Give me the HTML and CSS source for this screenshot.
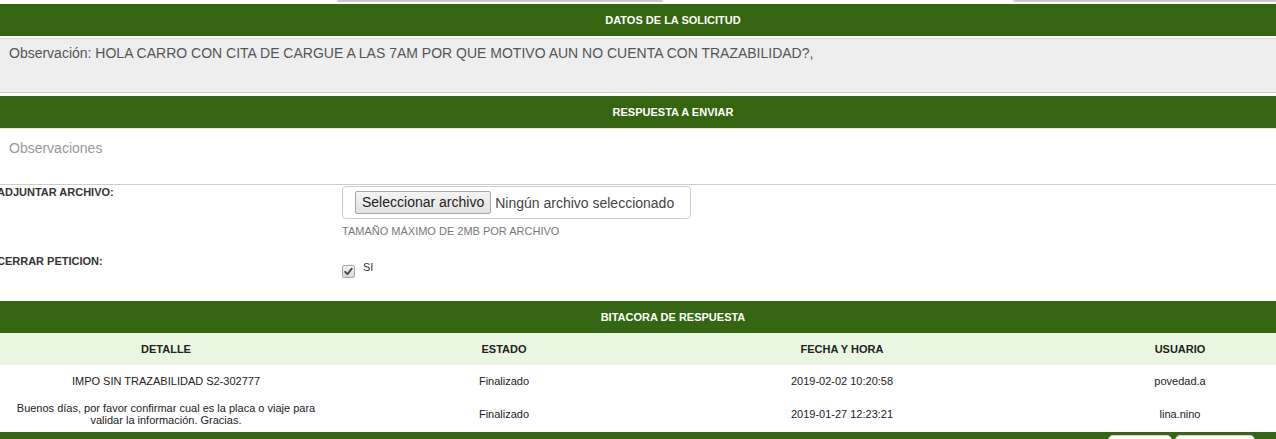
FILE: index.html
```html
<!DOCTYPE html>
<html lang="es">
<head>
<meta charset="utf-8">
<title>Solicitud</title>
<link rel="stylesheet" href="styles.css">
</head>
<body>
<div class="page">
  <div class="top-fields">
    <span class="field field-a"></span>
    <span class="field field-b"></span>
  </div>

  <div class="section-title">DATOS DE LA SOLICITUD</div>
  <div class="obs-panel">Observación: HOLA CARRO CON CITA DE CARGUE A LAS 7AM POR QUE MOTIVO AUN NO CUENTA CON TRAZABILIDAD?,</div>

  <div class="section-title">RESPUESTA A ENVIAR</div>
  <div class="answer-box"><span class="placeholder">Observaciones</span></div>

  <div class="form-row row-file">
    <div class="form-label">ADJUNTAR ARCHIVO:</div>
    <div class="form-control">
      <div class="file-box">
        <span class="file-btn">Seleccionar archivo</span>
        <span class="file-name">Ningún archivo seleccionado</span>
      </div>
      <div class="hint">TAMAÑO MÁXIMO DE 2MB POR ARCHIVO</div>
    </div>
  </div>

  <div class="form-row row-check">
    <div class="form-label">CERRAR PETICION:</div>
    <div class="form-control check-line">
      <span class="checkbox">
        <svg width="9" height="9" viewBox="0 0 9 9"><path d="M1.2 4.8 L3.4 7.2 L7.8 1.6" fill="none" stroke="#444" stroke-width="1.8" stroke-linecap="round" stroke-linejoin="round"/></svg>
      </span>
      <span class="check-text">SI</span>
    </div>
  </div>

  <div class="section-title">BITACORA DE RESPUESTA</div>
  <table class="log">
    <thead>
      <tr class="head"><th>DETALLE</th><th>ESTADO</th><th>FECHA Y HORA</th><th>USUARIO</th></tr>
    </thead>
    <tbody>
      <tr class="r1"><td>IMPO SIN TRAZABILIDAD S2-302777</td><td>Finalizado</td><td>2019-02-02 10:20:58</td><td>povedad.a</td></tr>
      <tr class="r2"><td>Buenos días, por favor confirmar cual es la placa o viaje para<br>validar la información. Gracias.</td><td>Finalizado</td><td>2019-01-27 12:23:21</td><td>lina.nino</td></tr>
    </tbody>
  </table>
  <div class="footer-bar">
    <span class="tab tab-a"></span>
    <span class="tab tab-b"></span>
  </div>
</div>
</body>
</html>
```

FILE: styles.css
```css
html, body {
  margin: 0;
  padding: 0;
  overflow: hidden;
  background: #ffffff;
}

body {
  font-family: "Liberation Sans", Arial, sans-serif;
  color: #333333;
}

.page {
  width: 1352px;
  margin-left: -3px;
}

.top-fields {
  height: 4px;
  display: flex;
}

.field {
  display: block;
  height: 0;
  border-bottom: 2px solid #c9c9c9;
  border-radius: 0 0 3px 3px;
}

.field-a {
  margin-left: 340px;
  width: 330px;
}

.field-b {
  margin-left: 350px;
  width: 340px;
}

.section-title {
  height: 32px;
  line-height: 32px;
  background: #346511;
  color: #ffffff;
  font-size: 11px;
  font-weight: bold;
  text-align: center;
}

.obs-panel {
  margin: 2px 0 3px;
  padding: 4px 12px 0;
  height: 49px;
  border-top: 1px solid #dcdcdc;
  border-bottom: 1px solid #cccccc;
  background: #eeeeee;
  color: #555555;
  font-size: 14px;
  line-height: 20px;
}

.answer-box {
  border-top: 1px solid #e6e6e6;
  border-bottom: 1px solid #cccccc;
  height: 46px;
  padding: 9px 12px 0;
  font-size: 14px;
  line-height: 20px;
}

.placeholder {
  color: #999999;
}

.form-row {
  display: flex;
}

.form-label {
  width: 345px;
  flex: none;
  font-size: 11px;
  font-weight: bold;
  color: #333333;
  line-height: 14px;
}

.row-file {
  height: 72px;
  padding-top: 1px;
}

.row-file .form-label {
  margin-top: -1px;
}

.file-box {
  width: 335px;
  height: 31px;
  border: 1px solid #cccccc;
  border-radius: 4px;
  display: flex;
  align-items: center;
  padding-left: 12px;
  font-size: 14px;
  color: #555555;
}

.file-btn {
  height: 21px;
  line-height: 21px;
  padding: 0 6px;
  border: 1px solid #a6a6a6;
  border-radius: 2px;
  background: linear-gradient(#f4f4f4, #e2e2e2);
  color: #222222;
  margin-right: 4px;
}

.file-name {
  color: #444444;
}

.hint {
  margin-top: 5px;
  font-size: 11px;
  line-height: 14px;
  color: #777777;
}

.row-check {
  height: 43px;
}

.row-check .form-label {
  margin-top: -4px;
}

.check-line {
  display: flex;
  align-items: flex-start;
  padding-top: 2px;
}

.checkbox {
  width: 11px;
  height: 11px;
  margin-top: 5px;
  border: 1px solid #a8a8a8;
  border-radius: 2px;
  background: linear-gradient(#f2f2f2, #d8d8d8);
  display: flex;
  align-items: center;
  justify-content: center;
}

.check-text {
  margin-left: 8px;
  font-size: 11px;
  line-height: 14px;
  color: #333333;
}

.log {
  width: 1352px;
  border-collapse: collapse;
  table-layout: fixed;
  font-size: 11px;
}

.log th,
.log td {
  padding: 0 8px;
  text-align: center;
  vertical-align: middle;
}

.log th {
  font-weight: bold;
  color: #222222;
}

.log td {
  color: #222222;
  line-height: 12px;
}

.head {
  height: 32px;
  background: #e9f7e1;
}

.r1 {
  height: 32px;
}

.r2 {
  height: 35px;
}

.r2 td {
  padding-bottom: 2px;
}

.footer-bar {
  height: 30px;
  background: #346511;
  display: flex;
  padding-left: 1111px;
}

.tab {
  display: block;
  margin-top: 3px;
  height: 27px;
  background: #ffffff;
  border: 1px solid #d6d6d6;
  border-radius: 5px 5px 0 0;
}

.tab-a {
  width: 62px;
}

.tab-b {
  width: 78px;
  margin-left: 3px;
}
```
